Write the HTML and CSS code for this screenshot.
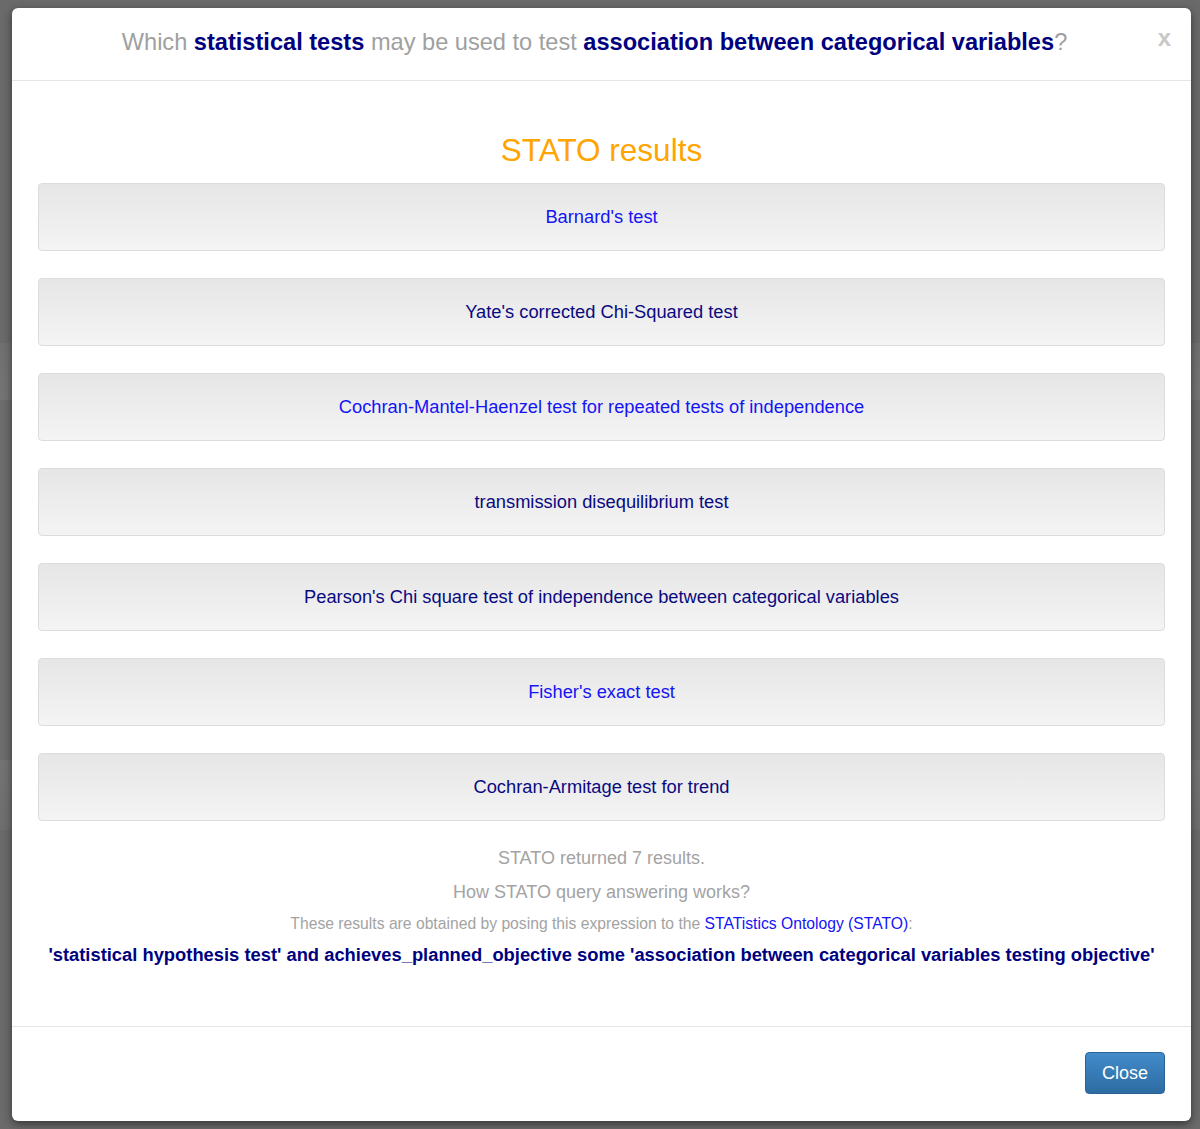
FILE: index.html
```html
<!DOCTYPE html>
<html>
<head>
<meta charset="utf-8">
<link rel="stylesheet" href="styles.css">
</head>
<body>
<div class="backdrop"></div>
<div class="modal">
  <div class="modal-header">
    <h4 class="title">Which <b>statistical tests</b> may be used to test <b>association between categorical variables</b>?</h4>
    <span class="close-x">x</span>
  </div>
  <div class="modal-body">
    <h2 class="results-title">STATO results</h2>
    <div class="results">
      <a class="result link">Barnard's test</a>
      <a class="result visited">Yate's corrected Chi-Squared test</a>
      <a class="result link">Cochran-Mantel-Haenzel test for repeated tests of independence</a>
      <a class="result visited">transmission disequilibrium test</a>
      <a class="result visited">Pearson's Chi square test of independence between categorical variables</a>
      <a class="result link">Fisher's exact test</a>
      <a class="result visited">Cochran-Armitage test for trend</a>
    </div>
    <p class="meta">STATO returned 7 results.</p>
    <p class="meta">How STATO query answering works?</p>
    <p class="meta small">These results are obtained by posing this expression to the <a class="stato">STATistics Ontology (STATO)</a>:</p>
    <p class="expr">'statistical hypothesis test' and achieves_planned_objective some 'association between categorical variables testing objective'</p>
  </div>
  <div class="modal-footer">
    <button class="btn-close">Close</button>
  </div>
</div>
</body>
</html>
```
FILE: styles.css
```css
html, body {
  margin: 0;
  padding: 0;
  width: 1200px;
  height: 1129px;
  overflow: hidden;
  font-family: "Liberation Sans", Arial, Helvetica, sans-serif;
}
body {
  background: #6c6c6c;
  position: relative;
}
.backdrop {
  height: 100%;
  background:
    linear-gradient(to bottom,
      #6a6a6a 0, #6a6a6a 343px, #707070 343px, #747474 400px,
      #6c6c6c 400px, #6c6c6c 760px, #737373 760px, #6e6e6e 830px,
      #6a6a6a 830px);
}
.modal {
  position: absolute;
  left: 12px;
  top: 8px;
  width: 1179px;
  height: 1113px;
  background: #fff;
  border-radius: 6px;
  box-shadow: 0 3px 9px rgba(0,0,0,0.5);
  display: flex;
  flex-direction: column;
}
.modal-header {
  position: relative;
  height: 72px;
  border-bottom: 1px solid #e5e5e5;
  display: flex;
  align-items: center;
  justify-content: center;
  padding-right: 14px;
}
.title {
  margin: 0 0 3px;
  font-size: 23.6px;
  font-weight: normal;
  color: #a0a0a0;
}
.title b {
  color: #00007f;
  font-weight: bold;
}
.close-x {
  position: absolute;
  right: 20px;
  top: 18px;
  font-size: 24px;
  font-weight: bold;
  color: #c8c8c8;
  line-height: 1;
}
.modal-body {
  flex: 1;
  padding: 0 26px;
  text-align: center;
}
.results-title {
  margin: 50px 0 14px;
  font-size: 31.5px;
  font-weight: normal;
  color: #ffa500;
  line-height: 38px;
}
.results {
  display: flex;
  flex-direction: column;
  gap: 27px;
}
.result {
  display: flex;
  align-items: center;
  justify-content: center;
  height: 66px;
  border: 1px solid #dcdcdc;
  border-radius: 4px;
  background: linear-gradient(to bottom, #e6e6e6 0%, #f4f4f4 100%);
  font-size: 18.3px;
  text-decoration: none;
}
.result.link { color: #1414f5; }
.result.visited { color: #0a0a80; }
.meta {
  margin: 14px 0 0;
  font-size: 18px;
  color: #a3a3a3;
  line-height: 20px;
}
.meta:first-of-type { margin-top: 27px; }
.meta.small {
  font-size: 15.7px;
  margin-top: 13px;
  line-height: 18px;
}
.stato { color: #1414f5; text-decoration: none; }
.expr {
  margin: 11px 0 0;
  font-size: 18.35px;
  font-weight: bold;
  color: #00007f;
  line-height: 22px;
  white-space: nowrap;
}
.modal-footer {
  height: 94px;
  border-top: 1px solid #e5e5e5;
  display: flex;
  align-items: flex-start;
  justify-content: flex-end;
  padding-right: 26px;
}
.btn-close {
  margin-top: 25px;
  width: 80px;
  height: 42px;
  border: 1px solid #2a6496;
  border-radius: 4px;
  background: linear-gradient(to bottom, #428bca 0%, #2d6ca2 100%);
  color: #fff;
  font-family: "Liberation Sans", Arial, sans-serif;
  font-size: 18px;
  padding: 0;
}
```
